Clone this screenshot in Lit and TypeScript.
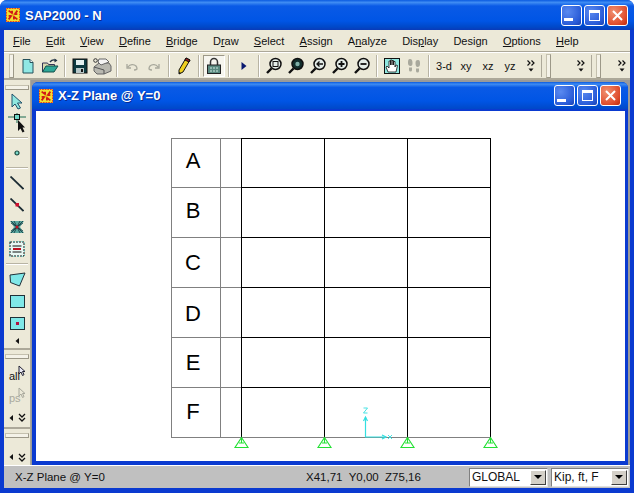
import { LitElement, html, css, svg } from "lit";
import { customElement } from "lit/decorators.js";

const logo = (s = 14) => svg`<svg width=${s} height=${s} viewBox="0 0 16 16">
  <rect x="0" y="0" width="16" height="16" fill="#f0e030"/>
  <rect x="0.5" y="0.5" width="15" height="15" fill="none" stroke="#e02020" stroke-dasharray="2 1"/>
  <path d="M3 3l4 3v-3M13 3l-3 4h3M13 13l-4-3v3M3 13l3-4h-3" fill="none" stroke="#d01818" stroke-width="2"/>
  <rect x="6.5" y="6.5" width="3" height="3" fill="#e8a018"/>
</svg>`;

const ico = (w: number, h: number, body: unknown) =>
  html`<svg width=${w} height=${h} viewBox="0 0 ${w} ${h}">${body}</svg>`;

const zoomBase = svg`<circle cx="10.500" cy="7" r="5.500" fill="#e4ece8" stroke="#101010" stroke-width="1.500"/><path d="M6.500 11.500L2 16" stroke="#101010" stroke-width="2.400"/>`;

const tb: Record<string, unknown> = {
  doc: ico(16, 16, svg`<path d="M3 1.500h7l3 3V15H3z" fill="#90e8e4" stroke="#24505a"/><path d="M10 1.500v3h3" fill="#fff" stroke="#24505a"/>`),
  open: ico(18, 16, svg`<path d="M1.500 14V5h5l1 1.500h6V9" fill="#d8d8b0" stroke="#335"/><path d="M1.500 14L5 8h12L13 14z" fill="#2ea898" stroke="#14504a"/><path d="M9 4c2-2.500 4-2.500 6-1.500" fill="none" stroke="#234" stroke-width="1.400"/><path d="M13.500 0.500l3 2-3 2z" fill="#234"/>`),
  save: ico(16, 16, svg`<rect x="1" y="1" width="14" height="14" fill="#0d3a40" stroke="#111"/><rect x="4" y="2" width="8" height="5" fill="#e4f0f0"/><rect x="4" y="10" width="8" height="5" fill="#b8c8c8"/><rect x="9" y="11" width="2" height="3" fill="#111"/>`),
  print: ico(20, 18, svg`<path d="M2 10l5-4h10l2 3v5l-7 3H5l-3-3z" fill="#b8b8b0" stroke="#666"/><path d="M7 2h7l3 3-8 3-3-3z" fill="#f4f4f4" stroke="#666"/><path d="M2 10l10 3v4" fill="none" stroke="#555"/><circle cx="3.500" cy="3.500" r="1.800" fill="none" stroke="#333"/>`),
  undo: ico(16, 16, svg`<path d="M3 6v4h4M4 9c2-3 6-3 8-1 1 1 1 2 1 3-1 1-2 1-3 1" fill="none" stroke="#a8a89c" stroke-width="1.300"/>`),
  redo: ico(16, 16, svg`<path d="M13 6v4H9M12 9c-2-3-6-3-8-1-1 1-1 2-1 3 1 1 2 1 3 1" fill="none" stroke="#a8a89c" stroke-width="1.300"/>`),
  pencil: ico(14, 20, svg`<path d="M9 2l4 2-7 12-4 2 0-4z" fill="#f0d020" stroke="#111"/><path d="M9 2l4 2-1 2-4-2z" fill="#a02020" stroke="#111"/><path d="M2 18l0-2 2 1z" fill="#111"/>`),
  lock: ico(16, 18, svg`<path d="M4.500 8V5a3.500 3.500 0 017 0v3" fill="none" stroke="#333" stroke-width="1.500"/><rect x="1.500" y="8" width="13" height="8.500" fill="#5a8a80" stroke="#222"/><path d="M4 11h8M4 14h8" stroke="#cfe8e0" stroke-dasharray="2 1"/>`),
  play: ico(8, 10, svg`<path d="M1.500 1v8l5-4z" fill="#0a1a70"/>`),
  z1: ico(18, 18, svg`${zoomBase}<rect x="8" y="4.500" width="5" height="5" fill="none" stroke="#111"/>`),
  z2: ico(18, 18, svg`<circle cx="10.500" cy="7" r="5.500" fill="#122e2c" stroke="#101010" stroke-width="1.500"/><circle cx="10.500" cy="7" r="2.200" fill="#7fb0a8"/><path d="M6.500 11.500L2 16" stroke="#101010" stroke-width="2.400"/>`),
  z3: ico(18, 18, svg`${zoomBase}<path d="M14 7H8M10.500 4.500L8 7l2.500 2.500" fill="none" stroke="#111" stroke-width="1.300"/>`),
  z4: ico(18, 18, svg`${zoomBase}<path d="M7.500 7h6M10.500 4v6" stroke="#111" stroke-width="1.800"/>`),
  z5: ico(18, 18, svg`${zoomBase}<path d="M7.500 7h6" stroke="#111" stroke-width="1.800"/>`),
  hand: ico(16, 16, svg`<rect x="0.500" y="0.500" width="15" height="15" fill="#90e8e0" stroke="#111"/><path d="M4 14l-2-5 1-1 2 2V3h1.500v4V2h1.500v5V2.500H9.500V7V3.500H11V9l1-2 1.500.5-1.500 6.500z" fill="#fff" stroke="#111" stroke-width=".8"/>`),
  feet: ico(16, 16, svg`<path d="M4 1c2 0 2.500 2 2.500 4S6 8 4.500 8 2 7 2 5s0-4 2-4zM3 9.500h3V12a1.500 1.500 0 01-3 0zM12 2c2 0 2 2 2 4s-1 3-2.500 3S9.500 7 9.500 5 10 2 12 2zM10 10.500h3V13a1.500 1.500 0 01-3 0z" fill="#a8a89c"/>`),
  chev: ico(10, 13, svg`<path d="M1.500 1.500L4 4 1.500 6.500M5.500 1.500L8 4 5.500 6.500" fill="none" stroke="#111" stroke-width="1.200"/><path d="M2.500 9.500h5L5 12.500z" fill="#111"/>`),
};

const lb: Record<string, unknown> = {
  cursor: ico(16, 17, svg`<path d="M3 1v13l3-3 3 5 2.500-1-3-5h4.500z" fill="#90e8e0" stroke="#20506a"/>`),
  tool: ico(20, 22, svg`<path d="M1 5h18M10 1v10" stroke="#1a6a50"/><rect x="7.500" y="2.500" width="5" height="5" fill="#70d8c8" stroke="#111"/><path d="M11 8v11l2.500-2.500 2 4 2-1-2-4H18z" fill="#111"/>`),
  dot: ico(8, 8, svg`<circle cx="4" cy="4" r="2" fill="#7ad8c8" stroke="#184a40" stroke-width="1.200"/>`),
  line: ico(14, 14, svg`<path d="M0.500 0.500L13.500 13" stroke="#1c2c34" stroke-width="1.800"/>`),
  line2: ico(14, 14, svg`<path d="M0.500 0.500L13.500 13" stroke="#1c2c34" stroke-width="1.800"/><rect x="5.500" y="5" width="3.500" height="3.500" fill="#d01030"/>`),
  x: ico(14, 14, svg`<path d="M0 1h14L10 7l4 6H0l4-6z" fill="#5aa8a0"/><path d="M1 1l12 12M13 1L1 13M4 1l6 12M10 1L4 13M1 3l12 8M13 3L1 11" stroke="#12323a" stroke-width=".8"/><circle cx="7" cy="7" r="1.500" fill="#c01020"/>`),
  frame: ico(16, 16, svg`<rect x="1" y="1" width="14" height="14" fill="#e8f8f4" stroke="#111" stroke-dasharray="2 1"/><rect x="0.500" y="0.500" width="15" height="15" fill="none" stroke="#40d0d0" stroke-dasharray="1 3"/><path d="M3.500 5h9M3.500 11h9" stroke="#111"/><rect x="4" y="7" width="8" height="2" fill="#c01020"/>`),
  poly: ico(17, 15, svg`<path d="M1 3L16 1 10.500 14 1.500 10.500z" fill="#80e8e8" stroke="#203038"/>`),
  rect: ico(15, 13, svg`<rect x=".5" y=".5" width="14" height="12" fill="#80e8e8" stroke="#203038"/>`),
  rectd: ico(15, 13, svg`<rect x=".5" y=".5" width="14" height="12" fill="#80e8e8" stroke="#203038"/><rect x="6" y="5" width="3" height="3" fill="#b01040"/>`),
};

const larrow = svg`<path d="M5 1v6L1.500 4z" fill="#111"/>`;
const dchev = svg`<path d="M1 1l3 3 3-3M1 5l3 3 3-3" fill="none" stroke="#111" stroke-width="1.300"/>`;

const minBtn = html`<span class="cap blue"><span class="min"></span></span>`;
const maxBtn = html`<span class="cap blue"><span class="max"></span></span>`;
const closeBtn = html`<span class="cap red">${ico(13, 13, svg`<path d="M2 2l9 9M11 2l-9 9" stroke="#fff" stroke-width="2"/>`)}</span>`;

const menu: [string, string, string][] = [
  ["", "F", "ile"], ["", "E", "dit"], ["", "V", "iew"], ["", "D", "efine"], ["", "B", "ridge"], ["D", "r", "aw"],
  ["", "S", "elect"], ["", "A", "ssign"], ["A", "n", "alyze"], ["Dis", "p", "lay"], ["Desi", "g", "n"], ["", "O", "ptions"], ["", "H", "elp"],
];
const rows = ["A", "B", "C", "D", "E", "F"];
const baselines = [168, 218, 270, 321, 370, 419];
const ys = [138, 187, 237, 287, 337, 387];
const xs = [241, 324, 407, 490];

@customElement("app-root")
export class AppRoot extends LitElement {
  static styles = css`
    :host { display: block; width: 634px; height: 493px; overflow: hidden; font-family: "Liberation Sans", Arial, sans-serif; font-size: 11px; color: #111; }
    .frame { width: 634px; height: 493px; box-sizing: border-box; padding: 0 4px 5px; display: flex; flex-direction: column;
      background: #0a3ad0; border-radius: 7px 7px 0 0; }
    .title { height: 30px; flex: none; margin: 0 -4px; padding: 0 6px 0 6px; display: flex; align-items: center; gap: 5px;
      background: linear-gradient(180deg, #0a5ae0 0, #3f8cf3 8%, #0a5ae6 20%, #0055e5 70%, #0048c8 90%, #0a3ab8 100%);
      border-radius: 7px 7px 0 0; color: #fff; font: bold 13px "Liberation Sans", sans-serif; text-shadow: 1px 1px 0 #0a2a90; }
    .title .t { flex: 1; }
    .caps { display: flex; gap: 2px; }
    .cap { width: 21px; height: 21px; box-sizing: border-box; border: 1px solid #fff; border-radius: 3px; display: flex; align-items: center; justify-content: center; }
    .blue { background: radial-gradient(circle at 30% 30%, #5a8af0, #2a5cd8 70%, #1a40b0); }
    .red { background: radial-gradient(circle at 30% 30%, #f09070, #e05030 65%, #c02808); }
    .min { width: 9px; height: 3px; background: #fff; margin: 9px 6px 0 0; }
    .max { width: 11px; height: 11px; box-sizing: border-box; border: 1px solid #fff; border-top-width: 3px; }
    .menu { height: 22px; flex: none; background: #ece9d8; display: flex; align-items: center; padding-left: 9px; gap: 15.2px; font-size: 11px; border-bottom: 1px solid #aca899; box-sizing: border-box; }
    .tools { height: 28px; flex: none; background: #ece9d8; display: flex; align-items: center; padding-left: 5px; box-sizing: border-box; border-top: 1px solid #fff; border-bottom: 2px solid #aca899; }
    .grip { width: 3px; height: 22px; margin: 0 3px 0 0; border: 1px solid #c4c0ae; border-right-color: #9c9888; border-bottom-color: #9c9888; background: #f4f2e8; flex: none; }
    .b { width: 22px; height: 22px; flex: none; display: flex; align-items: center; justify-content: center; font-size: 11px; }
    .b.pressed { background: #f6f5ee; border: 1px solid; border-color: #9c9888 #fff #fff #9c9888; box-sizing: border-box; }
    .s { width: 8px; height: 22px; flex: none; display: flex; justify-content: center; }
    .s::before { content: ""; width: 1px; height: 100%; background: #b8b4a4; border-right: 1px solid #fff; }
    .end { width: 20px; height: 22px; flex: none; display: flex; align-items: center; justify-content: center; border-right: 1px solid #aca899; }
    .end.last { border-right: 0; }
    .g1 { flex: none; width: 4px; }
    .g2 { flex: none; width: 17px; }
    .g3 { flex: none; width: 8px; }
    .main { flex: 1; display: flex; min-height: 0; background: #9a9a9a; }
    .left { width: 26px; flex: none; margin-right: 1px; background: #ece9d8; display: flex; flex-direction: column; align-items: center; border-right: 1px solid #aca899; }
    .sp5 { height: 5px; flex: none; }
    .lgrip { width: 22px; height: 3px; flex: none; border: 1px solid #c4c0ae; border-right-color: #9c9888; border-bottom-color: #9c9888; background: #f4f2e8; }
    .lgrip.m { margin-top: 4px; }
    .li { height: 22px; width: 24px; flex: none; display: flex; align-items: center; justify-content: center; }
    .li.m { margin-top: 5px; }
    .ls { height: 8px; width: 22px; flex: none; display: flex; align-items: center; }
    .ls::before { content: ""; height: 1px; width: 100%; background: #b8b4a4; border-bottom: 1px solid #fff; }
    .arrows { display: flex; align-items: center; gap: 4px; flex: none; }
    .a1 { height: 14px; }
    .a2 { height: 19px; }
    .a3 { height: 12px; margin-bottom: 2px; }
    .fill { flex: 1; }
    .word { font-size: 11px; position: relative; display: block; }
    .word span { display: block; padding: 6px 0 0 4px; }
    .word svg { position: absolute; top: 1px; right: 3px; }
    .word.off { color: #a8a89c; }
    .div { height: 2px; flex: none; align-self: stretch; background: #aca899; }
    .child { flex: 1; margin: 2px 2px 0 0; background: #0a3ad0; border-radius: 6px 6px 0 0; display: flex; flex-direction: column; padding: 0 3px 4px 4px; }
    .ctitle { height: 27px; flex: none; margin: 0 -3px 0 -4px; padding: 0 7px 0 7px; display: flex; align-items: center; gap: 5px; border-radius: 6px 6px 0 0;
      background: linear-gradient(180deg, #0a5ae0 0, #3f8cf3 8%, #0a5ae6 20%, #0055e5 70%, #0048c8 100%); color: #fff; font: bold 13px "Liberation Sans", sans-serif; text-shadow: 1px 1px 0 #0a2a90; }
    .ctitle .t { flex: 1; }
    .client { flex: 1; background: #fff; min-height: 0; margin-top: 2px; overflow: hidden; }
    .client svg { display: block; }
    .status { height: 22px; flex: none; background: #c0c0c0; display: flex; align-items: center; padding-left: 11px; border-top: 1px solid #fff; font-size: 11.500px; }
    .st1 { width: 291px; flex: none; }
    .st2 { width: 163px; flex: none; white-space: pre; }
    .combo { height: 19px; box-sizing: border-box; background: #fff; border: 1px solid; border-color: #808080 #e0e0e0 #e0e0e0 #808080; display: flex; align-items: center; padding-left: 2px; flex: none; margin-right: 3px; font-size: 12px; }
    .combo .txt { flex: 1; }
    .combo .dd { width: 16px; height: 15px; background: #d4d0c8; border: 1px solid; border-color: #fff #404040 #404040 #fff; box-sizing: border-box; display: flex; align-items: center; justify-content: center; margin-right: 1px; }
    .c1 { width: 79px; } .c2 { width: 78px; }
    text { font-family: "Liberation Sans", sans-serif; }
  `;

  private grid() {
    return html`<svg width="589" height="351" viewBox="36 111 589 351">
      <g fill="none" stroke="#808080" stroke-width="1" shape-rendering="crispEdges">
        <path d="M171 138.500H241M171 187.500H241M171 237.500H241M171 287.500H241M171 337.500H241M171 387.500H241"/>
        <path d="M171 437.500H491M171.500 138V438M220.500 138V437"/>
      </g>
      <g fill="none" stroke="#000" stroke-width="1" shape-rendering="crispEdges">
        ${ys.map((y) => svg`<path d="M241 ${y + 0.5}H491"/>`)}
        ${xs.map((x) => svg`<path d="M${x + 0.5} 138V437"/>`)}
      </g>
      ${rows.map((r, i) => svg`<text x="193" y=${baselines[i]} text-anchor="middle" font-size="22" fill="#000">${r}</text>`)}
      <g fill="none" stroke="#22e033" stroke-width="1.100">
        ${xs.map((x) => svg`<path d="M${x + 0.5} 437.500L${x + 7} 447.500H${x - 6}Z M${x - 2} 443h5M${x + 0.5} 437.500V443"/>`)}
      </g>
      <g stroke="#33dfe0" fill="none" stroke-width="1.200">
        <path d="M365.500 437V417M365 437H386" />
        <path d="M363.500 421L365.500 417 367.500 421M382 435L386 437 382 439"/>
        <path d="M363.500 408h4l-4 5h4" stroke-width=".9"/>
        <path d="M388 435l4 4M392 435l-4 4" stroke-width=".9"/>
      </g>
    </svg>`;
  }

  render() {
    return html`<div class="frame">
      <div class="title">${logo()}<span class="t">SAP2000 - N</span><div class="caps">${minBtn}${maxBtn}${closeBtn}</div></div>
      <div class="menu">${menu.map(([a, u, b]) => html`<span>${a}<u>${u}</u>${b}</span>`)}</div>
      <div class="tools">
        <span class="grip"></span>
        <span class="b">${tb.doc}</span><span class="b">${tb.open}</span><span class="s"></span>
        <span class="b">${tb.save}</span><span class="b">${tb.print}</span><span class="s"></span>
        <span class="b">${tb.undo}</span><span class="b">${tb.redo}</span><span class="s"></span>
        <span class="b">${tb.pencil}</span><span class="s"></span>
        <span class="b pressed">${tb.lock}</span><span class="s"></span>
        <span class="b">${tb.play}</span><span class="s"></span>
        <span class="b">${tb.z1}</span><span class="b">${tb.z2}</span><span class="b">${tb.z3}</span><span class="b">${tb.z4}</span><span class="b">${tb.z5}</span><span class="s"></span>
        <span class="b">${tb.hand}</span><span class="b">${tb.feet}</span><span class="s"></span>
        <span class="b">3-d</span><span class="b">xy</span><span class="b">xz</span><span class="b">yz</span>
        <span class="end">${tb.chev}</span><span class="g1"></span><span class="grip"></span><span class="g2"></span>
        <span class="end">${tb.chev}</span><span class="g1"></span><span class="grip"></span><span class="g3"></span>
        <span class="end last">${tb.chev}</span>
      </div>
      <div class="main">
        <div class="left">
          <div class="sp5"></div>
          <span class="lgrip"></span>
          <div class="li">${lb.cursor}</div>
          <div class="li">${lb.tool}</div><div class="ls"></div>
          <div class="li">${lb.dot}</div><div class="ls"></div>
          <div class="li">${lb.line}</div><div class="li">${lb.line2}</div><div class="li">${lb.x}</div><div class="li">${lb.frame}</div><div class="ls"></div>
          <div class="li">${lb.poly}</div><div class="li">${lb.rect}</div><div class="li">${lb.rectd}</div>
          <div class="arrows a1">${ico(6, 8, larrow)}</div>
          <div class="div"></div>
          <span class="lgrip m"></span>
          <div class="li word m"><span>all</span>${ico(8, 12, svg`<path d="M1 1v8l2-2 1.500 3.500 1.500-.8L4.500 6.500H7z" fill="#e8e8f4" stroke="#223"/>`)}</div>
          <div class="li word off"><span>ps</span>${ico(8, 12, svg`<path d="M1 1v8l2-2 1.500 3.500 1.500-.8L4.500 6.500H7z" fill="#ece9d8" stroke="#a8a89c"/>`)}</div>
          <div class="arrows a2">${ico(6, 8, larrow)}${ico(8, 9, dchev)}</div>
          <div class="div"></div>
          <span class="lgrip m"></span>
          <div class="fill"></div>
          <div class="arrows a3">${ico(6, 8, larrow)}${ico(8, 9, dchev)}</div>
        </div>
        <div class="child">
          <div class="ctitle">${logo()}<span class="t">X-Z Plane @ Y=0</span><div class="caps">${minBtn}${maxBtn}${closeBtn}</div></div>
          <div class="client">${this.grid()}</div>
        </div>
      </div>
      <div class="status">
        <span class="st1">X-Z Plane @ Y=0</span>
        <span class="st2">X41,71  Y0,00  Z75,16</span>
        <span class="combo c1"><span class="txt">GLOBAL</span><span class="dd">${ico(8, 4, svg`<path d="M0 0h8L4 4z" fill="#000"/>`)}</span></span>
        <span class="combo c2"><span class="txt">Kip, ft, F</span><span class="dd">${ico(8, 4, svg`<path d="M0 0h8L4 4z" fill="#000"/>`)}</span></span>
      </div>
    </div>`;
  }
}
